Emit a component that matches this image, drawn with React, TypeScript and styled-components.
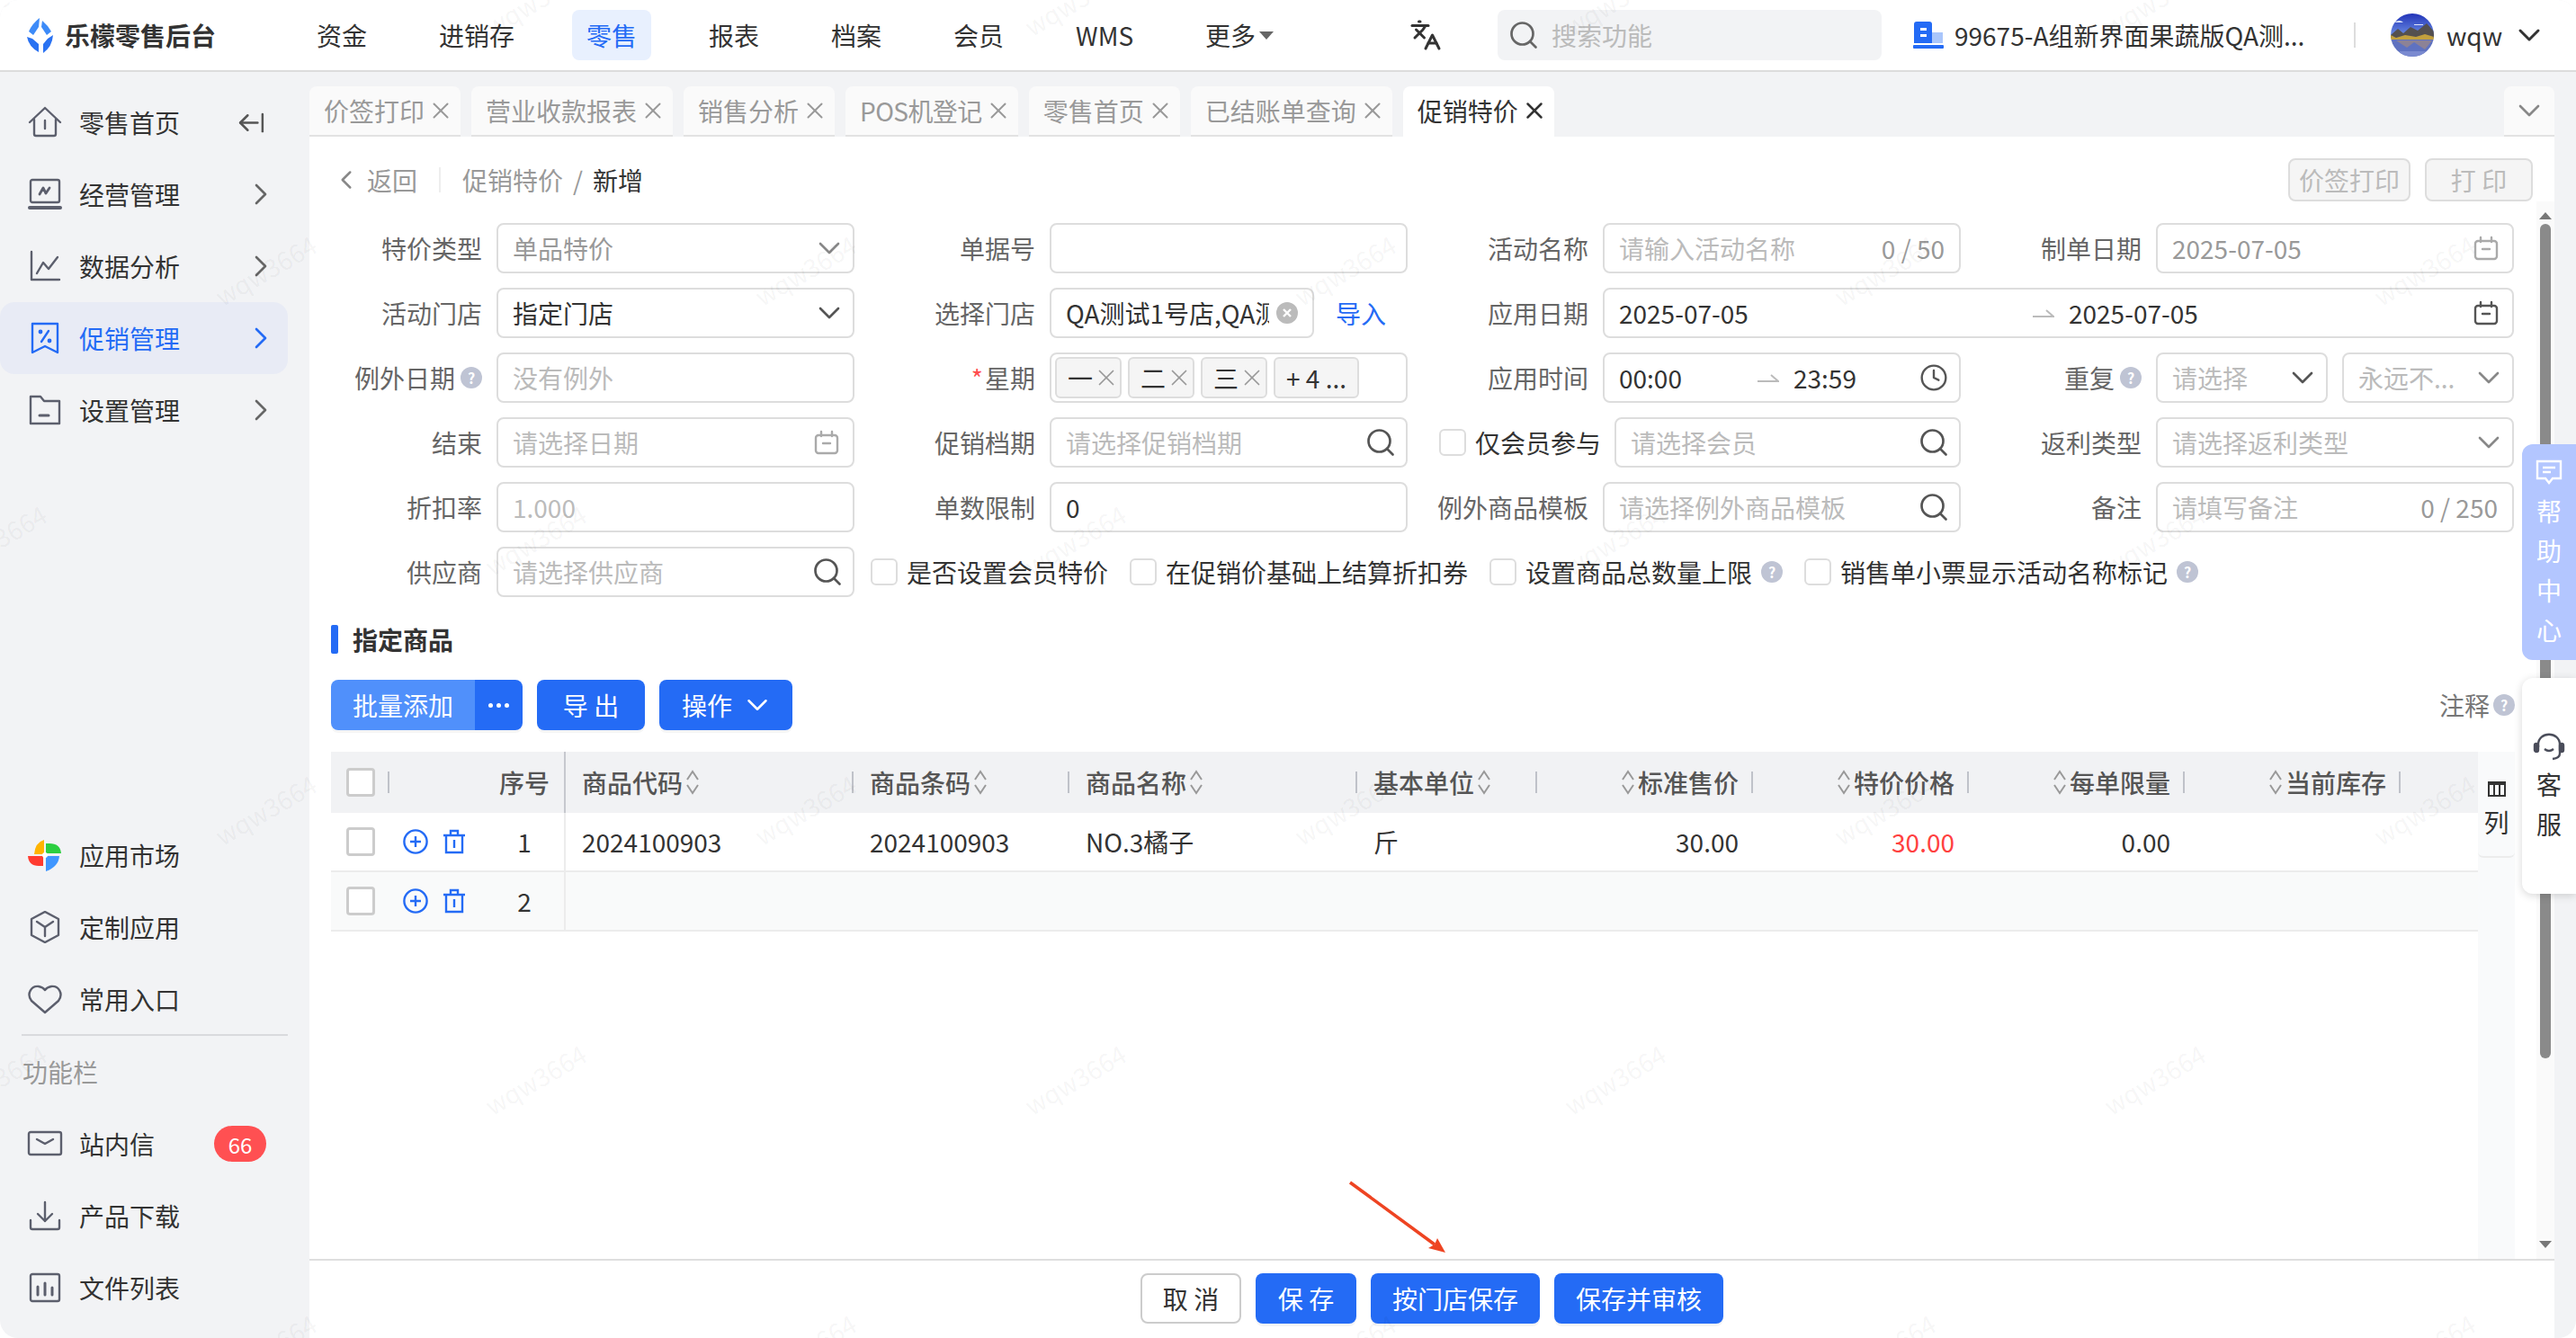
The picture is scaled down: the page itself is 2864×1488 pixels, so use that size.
import styled, { createGlobalStyle } from 'styled-components'
import {
  ArrowLeftFromLine,
  ChevronDown,
  ChevronLeft,
  ChevronRight,
  Clock,
  Languages,
  Search,
  X,
} from 'lucide-react'

const GlobalStyle = createGlobalStyle`
  html, body {
    margin: 0;
    padding: 0;
    background: #fff;
    font-family: "Noto Sans CJK SC", "Noto Sans", sans-serif;
    font-size: 28px;
    color: #333;
  }
`

const Frame = styled.div`
  position: relative;
  display: flex;
  flex-direction: column;
  width: 2864px;
  height: 1488px;
  overflow: hidden;
  border-radius: 20px;
  background: #f2f3f5;
`

/* ---------- header ---------- */

const Header = styled.header`
  display: flex;
  align-items: center;
  flex: none;
  height: 78px;
  padding-left: 30px;
  background: #fff;
  border-bottom: 2px solid #dcdcdc;
`

const Brand = styled.div`
  display: flex;
  align-items: center;
  gap: 12px;
  width: 306px;
  font-weight: 700;
  color: #333;
  white-space: nowrap;
`

const Nav = styled.nav`
  display: flex;
  align-items: center;
  gap: 48px;
  width: 1231px;
`

const NavItem = styled.div<{ $active?: boolean }>`
  display: flex;
  align-items: center;
  height: 56px;
  padding: 0 16px;
  border-radius: 8px;
  color: ${({ $active }) => ($active ? '#246bf5' : '#333')};
  background: ${({ $active }) => ($active ? '#e8f0fe' : 'transparent')};
  white-space: nowrap;
`

const NavCaret = styled.span`
  width: 0;
  height: 0;
  margin-left: 4px;
  border-left: 8px solid transparent;
  border-right: 8px solid transparent;
  border-top: 9px solid #666;
`

const HeaderTools = styled.div`
  display: flex;
  align-items: center;
`

const SearchBox = styled.div`
  display: flex;
  align-items: center;
  gap: 13px;
  width: 427px;
  height: 56px;
  margin-left: 62px;
  padding-left: 11px;
  box-sizing: border-box;
  border-radius: 8px;
  background: #f2f3f5;
  color: #bbb;
`

const StoreName = styled.div`
  display: flex;
  align-items: center;
  gap: 12px;
  width: 490px;
  margin-left: 35px;
  white-space: nowrap;
`

const HeaderDivider = styled.span`
  width: 2px;
  height: 28px;
  background: #ddd;
`

const UserName = styled.div`
  display: flex;
  align-items: center;
  gap: 14px;
  margin-left: 39px;
`

const UserChevron = styled(ChevronDown)`
  margin-left: -4px;
`

/* ---------- layout ---------- */

const Body = styled.div`
  display: flex;
  flex: 1;
  min-height: 0;
`

const Sidebar = styled.aside`
  display: flex;
  flex-direction: column;
  flex: none;
  width: 344px;
  padding: 16px 0;
  box-sizing: border-box;
`

const SideItem = styled.div<{ $active?: boolean }>`
  display: flex;
  align-items: center;
  flex: none;
  width: 320px;
  height: 80px;
  box-sizing: border-box;
  padding: 0 10px 0 30px;
  border-radius: 16px;
  color: ${({ $active }) => ($active ? '#246bf5' : '#333')};
  background: ${({ $active }) => ($active ? '#e8ebf5' : 'transparent')};

  > svg:first-child {
    flex: none;
    margin-right: 18px;
  }
  > svg:last-child {
    margin-left: auto;
  }
`

const CollapseIcon = styled(ArrowLeftFromLine)`
  margin-right: 14px;
`

const SideSpacer = styled.div`
  flex: 1;
`

const SideRule = styled.div`
  flex: none;
  width: 296px;
  height: 2px;
  margin: -1px 0 0 24px;
  background: #d9dadd;
`

const SideCaption = styled.div`
  display: flex;
  align-items: center;
  flex: none;
  height: 80px;
  padding-left: 25px;
  color: #999;
`

const CountBadge = styled.div`
  display: flex;
  align-items: center;
  justify-content: center;
  flex: none;
  width: 58px;
  height: 40px;
  margin: 0 14px 0 auto;
  border-radius: 20px;
  font-size: 24px;
  color: #fff;
  background: #ff5052;
`

const Main = styled.main`
  display: flex;
  flex-direction: column;
  flex: 1;
  min-width: 0;
  padding-right: 24px;
`

const TabBar = styled.div`
  display: flex;
  align-items: flex-end;
  flex: none;
  gap: 12px;
  height: 72px;
`

const Tab = styled.div<{ $active?: boolean; $tight?: boolean }>`
  display: flex;
  align-items: center;
  height: 56px;
  gap: 3px;
  padding: 0 7px 0 16px;
  box-sizing: border-box;
  border-radius: 8px 8px 0 0;
  white-space: nowrap;
  letter-spacing: ${({ $tight }) => ($tight ? '-0.6px' : 'normal')};
  color: ${({ $active }) => ($active ? '#333' : '#999')};
  background: ${({ $active }) => ($active ? '#fff' : '#fafafa')};
  border-bottom: 2px solid ${({ $active }) => ($active ? '#fff' : '#e2e2e2')};
`

const TabMenu = styled(Tab)`
  justify-content: center;
  width: 56px;
  margin-left: auto;
  padding: 0;
`

const Content = styled.section`
  position: relative;
  display: flex;
  flex-direction: column;
  flex: 1;
  min-height: 0;
  background: #fff;
`

const Page = styled.div`
  display: flex;
  flex-direction: column;
  flex: 1;
  min-height: 0;
  padding: 24px 44px 0 24px;
`

const Crumbs = styled.div`
  display: flex;
  align-items: center;
  flex: none;
  height: 48px;
  margin: 0 -20px 24px 0;
  color: #999;
`

const CrumbBack = styled.span`
  display: flex;
  align-items: center;
  gap: 6px;
`

const CrumbRule = styled.span`
  width: 2px;
  height: 28px;
  margin: 0 24px;
  background: #eee;
`

const CrumbSlash = styled.span`
  margin: 0 11px;
`

const CrumbCurrent = styled.span`
  color: #333;
`

const CrumbActions = styled.div`
  display: flex;
  gap: 16px;
  margin-left: auto;
`

const GhostButton = styled.button<{ $wide?: boolean }>`
  width: ${({ $wide }) => ($wide ? '136px' : '120px')};
  height: 48px;
  padding: 0;
  font: inherit;
  color: #bbb;
  background: #f5f5f5;
  border: 2px solid #ddd;
  border-radius: 8px;
`

/* ---------- form ---------- */

const Form = styled.div`
  display: grid;
  flex: none;
  grid-template-columns: repeat(4, 590px);
  grid-auto-rows: 56px;
  gap: 16px 25px;
  margin-left: -8px;
`

const Field = styled.div<{ $span?: number }>`
  display: flex;
  align-items: center;
  min-width: 0;
  grid-column: span ${({ $span }) => $span ?? 1};
`

const Label = styled.label`
  display: flex;
  align-items: center;
  justify-content: flex-end;
  flex: none;
  gap: 6px;
  width: 176px;
  margin-right: 16px;
  color: #666;
  white-space: nowrap;
`

const Required = styled.span`
  color: #ff4d4f;
  margin-right: -4px;
`

const Control = styled.div<{ $tone?: 'muted' | 'ghost' }>`
  display: flex;
  align-items: center;
  flex: 1;
  min-width: 0;
  height: 56px;
  padding: 0 16px;
  box-sizing: border-box;
  border: 2px solid #ddd;
  border-radius: 8px;
  background: #fff;
  white-space: nowrap;
  color: ${({ $tone }) =>
    $tone === 'muted' ? '#999' : $tone === 'ghost' ? '#bbb' : '#333'};

  > svg {
    flex: none;
    margin-left: auto;
  }
`

const Counter = styled.span`
  margin-left: auto;
  color: #999;
`

const StoreValue = styled.span`
  flex: 1;
  min-width: 0;
  margin-right: 8px;
  overflow: hidden;
`

const LinkText = styled.a`
  flex: none;
  margin: 0 24px;
  color: #246bf5;
`

const TagBox = styled(Control)`
  gap: 7px;
  padding: 0 4px;
`

const Tag = styled.span`
  display: flex;
  align-items: center;
  flex: none;
  height: 46px;
  padding-left: 12px;
  box-sizing: border-box;
  border: 2px solid #ddd;
  border-radius: 6px;
  background: #f5f5f5;
`

const MoreTag = styled(Tag)`
  justify-content: center;
  width: 95px;
  padding: 0;
`

const RangeText = styled.span<{ $w: number }>`
  flex: none;
  width: ${({ $w }) => $w}px;
`

const RangeArrow = styled.svg`
  flex: none;
  margin-right: 16px;
  && {
    margin-left: 0;
  }
`

const DropIcon = styled(ChevronDown)`
  && {
    margin-right: -10px;
  }
`

const LensIcon = styled(Search)`
  && {
    margin-right: -6px;
  }
`

const ClockIcon = styled(Clock)`
  && {
    margin-right: -4px;
  }
`

const Pair = styled.div`
  display: flex;
  flex: 1;
  gap: 16px;
  min-width: 0;
`

const Hint = styled.span`
  display: inline-flex;
  align-items: center;
  justify-content: center;
  flex: none;
  width: 24px;
  height: 24px;
  border-radius: 50%;
  font-size: 16px;
  font-weight: 700;
  color: #fff;
  background: #bfc4d4;
`

const CheckLabel = styled.label`
  display: flex;
  align-items: center;
  flex: none;
  gap: 10px;
  color: #333;
  white-space: nowrap;
`

const CheckBox = styled.span`
  flex: none;
  width: 30px;
  height: 30px;
  box-sizing: border-box;
  border: 2px solid #ddd;
  border-radius: 6px;
  background: #fff;
`

const MemberField = styled(Field)`
  padding-left: 10px;
  gap: 15px;
`

const CheckRow = styled.div`
  display: flex;
  align-items: center;
  grid-column: 2 / 5;
  gap: 24px;
  margin-left: -7px;
`

/* ---------- table ---------- */

const SectionTitle = styled.h3`
  display: flex;
  align-items: center;
  flex: none;
  gap: 16px;
  height: 32px;
  margin: 31px 0 29px;
  font-size: 28px;
  font-weight: 700;
  color: #333;

  &::before {
    content: '';
    width: 8px;
    height: 32px;
    border-radius: 2px;
    background: #246bf5;
  }
`

const Toolbar = styled.div`
  display: flex;
  align-items: center;
  flex: none;
  gap: 16px;
  height: 56px;
  margin-bottom: 24px;
`

const SplitButton = styled.div`
  display: flex;
  height: 56px;
  overflow: hidden;
  border-radius: 8px;
  box-shadow: 0 3px 0 rgba(0, 0, 0, 0.04);
  color: #fff;
`

const SplitMain = styled.div`
  display: flex;
  align-items: center;
  justify-content: center;
  width: 160px;
  background: #5090fb;
`

const SplitMore = styled.div`
  display: flex;
  align-items: center;
  justify-content: center;
  gap: 4px;
  width: 53px;
  background: #246bf5;
`

const Dot = styled.i`
  width: 5px;
  height: 5px;
  border-radius: 50%;
  background: #fff;
`

const PrimaryButton = styled.button<{ $width: number }>`
  display: flex;
  align-items: center;
  justify-content: center;
  gap: 9px;
  flex: none;
  width: ${({ $width }) => $width}px;
  height: 56px;
  padding: 0;
  font: inherit;
  color: #fff;
  background: #246bf5;
  border: none;
  border-radius: 8px;
  box-shadow: 0 3px 0 rgba(0, 0, 0, 0.04);
`

const MenuButton = styled(PrimaryButton)`
  padding-left: 5px;
`

const Notes = styled.div`
  display: flex;
  align-items: center;
  gap: 4px;
  margin-left: auto;
  color: #777;
`

const TableWrap = styled.div`
  display: flex;
  flex: 1;
  min-height: 0;
`

const Table = styled.div`
  flex: none;
  width: 2387px;
`

const Row = styled.div<{ $kind: 'head' | 'even' | 'odd' }>`
  display: grid;
  grid-template-columns: 261px 320px 240px 320px 200px 240px 240px 240px 240px 86px;
  box-sizing: border-box;
  height: ${({ $kind }) => ($kind === 'head' ? '68px' : '66px')};
  background: ${({ $kind }) =>
    $kind === 'head' ? '#f1f2f4' : $kind === 'even' ? '#f9fafa' : '#fff'};
  border-bottom: ${({ $kind }) =>
    $kind === 'head' ? 'none' : '2px solid #ececec'};
  font-weight: ${({ $kind }) => ($kind === 'head' ? 500 : 400)};
  color: ${({ $kind }) => ($kind === 'head' ? '#555' : '#333')};
`

const Cell = styled.div<{ $right?: boolean; $sep?: boolean; $red?: boolean }>`
  position: relative;
  display: flex;
  align-items: center;
  justify-content: ${({ $right }) => ($right ? 'flex-end' : 'flex-start')};
  gap: 3px;
  padding: ${({ $right }) => ($right ? '0 16px 0 0' : '0 0 0 18px')};
  white-space: nowrap;
  color: ${({ $red }) => ($red ? '#ff4040' : 'inherit')};

  &::after {
    content: '';
    display: ${({ $sep }) => ($sep ? 'block' : 'none')};
    position: absolute;
    top: 50%;
    right: 0;
    width: 2px;
    height: 24px;
    margin-top: -12px;
    background: #bfc2c9;
  }
`

const LeadCell = styled.div<{ $head?: boolean }>`
  display: flex;
  align-items: center;
  padding-left: 17px;
  border-right: 2px solid ${({ $head }) => ($head ? '#c6c8ce' : '#ececec')};
`

const RowCheck = styled.span`
  flex: none;
  width: 32px;
  height: 32px;
  box-sizing: border-box;
  border: 3px solid #ccc;
  border-radius: 4px;
  background: #fff;
`

const HeadRule = styled.span`
  width: 2px;
  height: 24px;
  margin-left: 14px;
  background: #bfc2c9;
`

const RowActions = styled.span`
  display: flex;
  align-items: center;
  gap: 16px;
  margin-left: 31px;
`

const RowIndex = styled.span`
  flex: none;
  width: 56px;
  margin: 0 16px 0 auto;
  text-align: center;
`

const ColPanel = styled.div`
  display: flex;
  flex-direction: column;
  flex: none;
  width: 41px;
  background: #f9fafb;
`

const ColButton = styled.div`
  display: flex;
  flex-direction: column;
  align-items: center;
  gap: 8px;
  height: 118px;
  padding-top: 32px;
  box-sizing: border-box;
  border-bottom: 2px solid #ececec;
  border-radius: 0 0 6px 6px;
`

/* ---------- footer and overlays ---------- */

const Footer = styled.footer`
  display: flex;
  align-items: center;
  justify-content: center;
  flex: none;
  gap: 16px;
  height: 88px;
  padding-bottom: 2px;
  box-sizing: border-box;
  background: #fff;
  border-top: 2px solid #dedede;
`

const CancelButton = styled.button`
  width: 112px;
  height: 56px;
  padding: 0;
  font: inherit;
  color: #333;
  background: #fff;
  border: 2px solid #ccc;
  border-radius: 8px;
`

const ScrollTrack = styled.div`
  position: absolute;
  top: 72px;
  right: 0;
  bottom: 88px;
  display: flex;
  flex-direction: column;
  align-items: center;
  width: 20px;
  background: #fafafa;
`

const ScrollThumb = styled.div`
  width: 12px;
  height: 928px;
  margin: 5px 0 auto;
  border-radius: 6px;
  background: #8a8a8a;
`

const ScrollArrow = styled.span<{ $down?: boolean }>`
  flex: none;
  width: 0;
  height: 0;
  margin: ${({ $down }) => ($down ? '0 0 12px' : '12px 0 0')};
  border-left: 7px solid transparent;
  border-right: 7px solid transparent;
  border-${({ $down }) => ($down ? 'top' : 'bottom')}: 8px solid #777;
`

const SideTab = styled.div<{ $top: number; $help?: boolean }>`
  position: absolute;
  top: ${({ $top }) => $top}px;
  right: 0;
  display: flex;
  flex-direction: column;
  align-items: center;
  width: 60px;
  height: 240px;
  box-sizing: border-box;
  border-radius: 12px 0 0 12px;
  line-height: 44px;
  color: ${({ $help }) => ($help ? '#fff' : '#333')};
  background: ${({ $help }) => ($help ? '#b3c6ff' : '#fff')};
  box-shadow: ${({ $help }) =>
    $help ? 'none' : '0 2px 10px rgba(0, 0, 0, 0.16)'};
  padding-top: ${({ $help }) => ($help ? '16px' : '60px')};

  > svg {
    flex: none;
    margin-bottom: ${({ $help }) => ($help ? '6px' : '2px')};
  }
`

const MarkLayer = styled.div`
  position: absolute;
  inset: -150px 0 0 0;
  overflow: hidden;
  pointer-events: none;
`

const MarkRow = styled.div<{ $shift: boolean }>`
  display: flex;
  height: 300px;
  margin-left: ${({ $shift }) => ($shift ? '-5px' : '-305px')};
`

const Mark = styled.span`
  display: flex;
  align-items: center;
  justify-content: center;
  flex: none;
  width: 600px;
  font-size: 28px;
  color: rgba(0, 0, 0, 0.05);
  transform: rotate(-30deg);
`

const AnnotationArrow = styled.svg`
  position: absolute;
  top: 1310px;
  left: 1495px;
`

/* ---------- icons ---------- */

const iconGray = '#5c5f6d'

const LogoIcon = () => (
  <svg width="30" height="40" viewBox="0 0 30 40">
    <path d="M14 1 Q6 7 2 16 L7 20 L13 11Z" fill="#3d8bf8" />
    <path d="M17 4 Q23 9 27 16 L22 20 L16 11Z" fill="#3d8bf8" />
    <path d="M0 22 Q2 33 13 39 V30 L6 24Z" fill="#2a72f2" />
    <path d="M29 20 Q28 33 18 40 V30 L23 24Z" fill="#2a72f2" />
  </svg>
)

const StoreIcon = () => (
  <svg width="34" height="30" viewBox="0 0 34 30">
    <path d="M1 3 Q1 0 4 0 H18 Q21 0 21 3 V24 H1Z" fill="#246bf5" />
    <rect x="21" y="12" width="12" height="12" fill="#a9c6fb" />
    <rect x="8" y="7" width="7" height="3" fill="#fff" />
    <rect x="8" y="14" width="7" height="3" fill="#fff" />
    <rect x="0" y="26" width="34" height="4" rx="1" fill="#246bf5" />
  </svg>
)

const Avatar = () => (
  <svg width="48" height="48" viewBox="0 0 48 48">
    <defs>
      <clipPath id="avatar-clip">
        <circle cx="24" cy="24" r="24" />
      </clipPath>
      <linearGradient id="avatar-sky" x1="0" y1="0" x2="0" y2="1">
        <stop offset="0" stopColor="#2234b8" />
        <stop offset="1" stopColor="#6f92e6" />
      </linearGradient>
    </defs>
    <g clipPath="url(#avatar-clip)">
      <rect width="48" height="26" fill="url(#avatar-sky)" />
      <path d="M4 10 Q10 6 14 10Z M26 12 H36 V13 H26Z" fill="#dfe6fa" />
      <path d="M0 24 L8 17 L14 22 L22 15 L30 19 L40 11 L48 20 V28 H0Z" fill="#54504f" />
      <path d="M0 24 L6 27 L16 24 L28 26 L38 23 L48 26 V30 H0Z" fill="#c2a03e" />
      <rect y="29" width="48" height="19" fill="#5f72c0" />
      <path d="M6 30 L18 38 L26 32 L38 40 L46 30Z" fill="#8c8296" />
      <path d="M10 42 H40 V48 H10Z" fill="#7a8ad0" />
    </g>
  </svg>
)

const Stroke = styled.svg.attrs({
  fill: 'none',
  strokeWidth: 2.4,
  strokeLinejoin: 'round',
  strokeLinecap: 'round',
})``

const HomeIcon = () => (
  <Stroke width="40" height="36" viewBox="0 0 40 36" stroke={iconGray}>
    <path d="M20 2 L37 18 M20 2 L3 18 M8 15 V31 Q8 33 10 33 H30 Q32 33 32 31 V15 M20 16 V25" />
  </Stroke>
)

const BoardIcon = () => (
  <Stroke width="40" height="36" viewBox="0 0 40 36" stroke={iconGray}>
    <rect x="4" y="2" width="32" height="25" rx="2" />
    <path d="M14 18 L18 11 L21 17 L25 11" strokeWidth="2.8" />
    <path d="M3 33 H37" strokeWidth="4" />
  </Stroke>
)

const ChartIcon = () => (
  <Stroke width="40" height="36" viewBox="0 0 40 36" stroke={iconGray}>
    <path d="M5 2 V33 H36 M11 26 L18 14 L24 21 L34 8" />
  </Stroke>
)

const PromoIcon = () => (
  <Stroke width="40" height="36" viewBox="0 0 40 36" stroke="#246bf5">
    <path d="M6 2 H34 V34 L20 27 L6 34Z" />
    <path d="M24 10 L16 22" />
    <circle cx="15" cy="11" r="1.2" />
    <circle cx="25" cy="21" r="1.2" />
  </Stroke>
)

const FolderIcon = () => (
  <Stroke width="40" height="36" viewBox="0 0 40 36" stroke={iconGray}>
    <path d="M4 3 H15 L19 8 H36 V33 H4Z" />
    <path d="M14 24 H24" strokeWidth="3" />
  </Stroke>
)

const PinwheelIcon = () => (
  <svg width="40" height="36" viewBox="0 0 40 36">
    <path d="M19 17 H8 Q9 4 19 1Z" fill="#ffb400" />
    <path d="M21 16 V5 H25 Q37 5 38 16Z" fill="#2ccf40" />
    <path d="M21 19 H36 Q35 31 21 36Z" fill="#3f96ff" />
    <path d="M18 19 V30 H13 Q2 30 1 19Z" fill="#ff3b30" />
    <circle cx="20" cy="18" r="3" fill="#fff" />
  </svg>
)

const CubeIcon = () => (
  <Stroke width="40" height="36" viewBox="0 0 40 36" stroke={iconGray}>
    <path d="M20 1 L35 9 V27 L20 35 L5 27 V9Z" />
    <path d="M11 12 L20 18 L29 12 M20 18 V28" />
  </Stroke>
)

const HeartIcon = () => (
  <Stroke width="40" height="36" viewBox="0 0 40 36" stroke={iconGray}>
    <path d="M20 33 L5 20 C-1 12 5 3 13 4 Q18 5 20 8 Q22 5 27 4 C35 3 41 12 35 20Z" />
  </Stroke>
)

const MailIcon = () => (
  <Stroke width="40" height="36" viewBox="0 0 40 36" stroke={iconGray}>
    <rect x="2" y="5" width="36" height="25" rx="2" />
    <path d="M11 13 L20 18 L29 13" />
  </Stroke>
)

const DownloadIcon = () => (
  <Stroke width="40" height="36" viewBox="0 0 40 36" stroke={iconGray}>
    <path d="M20 3 V24 M12 16 L20 24 L28 16 M4 23 V31 Q4 33 6 33 H34 Q36 33 36 31 V23" />
  </Stroke>
)

const FilesIcon = () => (
  <Stroke width="40" height="36" viewBox="0 0 40 36" stroke={iconGray}>
    <rect x="4" y="3" width="32" height="30" rx="2" />
    <path d="M12 17 V26 M20 13 V26 M28 18 V26" strokeWidth="3" />
  </Stroke>
)

const CalendarSvg = styled(Stroke)`
  && {
    margin-right: -2px;
  }
`

const CalendarIcon = ({ dark }: { dark?: boolean }) => (
  <CalendarSvg width="30" height="28" viewBox="0 0 30 28" stroke={dark ? '#555' : '#aaa'}>
    <rect x="3" y="6" width="24" height="20" rx="3" />
    <path d="M9 2 V7 M21 2 V7 M11 15 H19" />
  </CalendarSvg>
)

const Chevron = ({ color = '#888' }: { color?: string }) => (
  <DropIcon size={40} color={color} strokeWidth={1.6} />
)
const Lens = () => <LensIcon size={36} color="#555" strokeWidth={1.8} />

const ClearIcon = () => (
  <svg width="24" height="24" viewBox="0 0 24 24">
    <circle cx="12" cy="12" r="12" fill="#bbb" />
    <path d="M8 8 L16 16 M16 8 L8 16" stroke="#fff" strokeWidth="2.4" />
  </svg>
)

const ThinArrow = () => (
  <RangeArrow width="24" height="12" viewBox="0 0 24 12" fill="none" stroke="#bbb" strokeWidth="2">
    <path d="M0 10 H23 L15 3" />
  </RangeArrow>
)

const TagClose = () => <X size={30} color="#999" strokeWidth={1.4} />

const SortIcon = () => (
  <svg width="16" height="28" viewBox="0 0 16 28" fill="none" stroke="#999" strokeWidth="2">
    <path d="M2 11 L8 2 L14 11 M2 17 L8 26 L14 17" />
  </svg>
)

const AddIcon = () => (
  <svg width="28" height="28" viewBox="0 0 28 28" fill="none" stroke="#246bf5" strokeWidth="2.4">
    <circle cx="14" cy="14" r="12.6" />
    <path d="M14 8 V20 M8 14 H20" />
  </svg>
)

const TrashIcon = () => (
  <svg width="26" height="28" viewBox="0 0 26 28" fill="none" stroke="#246bf5" strokeWidth="2.4">
    <path d="M1 7 H25 M9 7 V2 H17 V7 M4 7 V26 H22 V7 M13 12 V21" />
  </svg>
)

const ColumnsIcon = () => (
  <svg width="20" height="18" viewBox="0 0 20 18" fill="none" stroke="#333" strokeWidth="2">
    <path d="M1 2 H19 V17 H1Z M7 2 V17 M13 2 V17" />
    <path d="M1 3 H19" strokeWidth="4" />
  </svg>
)

const BubbleIcon = () => (
  <svg width="32" height="30" viewBox="0 0 32 30" fill="none" stroke="#fff" strokeWidth="2.4">
    <path d="M3 3 H29 V22 H20 L16 27 L12 22 H3Z" />
    <path d="M9 10 H23 M9 15 H18" />
  </svg>
)

const HeadsetIcon = () => (
  <svg width="36" height="34" viewBox="0 0 36 34" fill="none" stroke="#4a4d5a" strokeWidth="2.4">
    <path d="M6 17 V14 C6 -1 30 -1 30 14 V24 Q30 29 22 30" />
    <rect x="2" y="13" width="4" height="9" rx="2" fill="#4a4d5a" />
    <rect x="30" y="13" width="4" height="9" rx="2" fill="#4a4d5a" />
    <path d="M13 19 Q18 23 23 19" />
  </svg>
)

/* ---------- page data ---------- */

const navItems = ['资金', '进销存', '零售', '报表', '档案', '会员', 'WMS']
const tabs = ['价签打印', '营业收款报表', '销售分析', 'POS机登记', '零售首页', '已结账单查询']

const sideArrow = (color: string) => (
  <ChevronRight size={40} color={color} strokeWidth={1.6} />
)

const sideTop = [
  { label: '零售首页', icon: <HomeIcon />, tail: <CollapseIcon size={33} color="#555" strokeWidth={1.8} /> },
  { label: '经营管理', icon: <BoardIcon />, tail: sideArrow('#666') },
  { label: '数据分析', icon: <ChartIcon />, tail: sideArrow('#666') },
  { label: '促销管理', icon: <PromoIcon />, tail: sideArrow('#246bf5'), active: true },
  { label: '设置管理', icon: <FolderIcon />, tail: sideArrow('#666') },
]

const columns = [
  { label: '商品代码', value: '2024100903', sep: true },
  { label: '商品条码', value: '2024100903', sep: true },
  { label: '商品名称', value: 'NO.3橘子', sep: true },
  { label: '基本单位', value: '斤', sep: true },
  { label: '标准售价', value: '30.00', right: true, sep: true },
  { label: '特价价格', value: '30.00', right: true, sep: true, red: true },
  { label: '每单限量', value: '0.00', right: true, sep: true },
  { label: '当前库存', value: '', right: true, sep: true },
  { label: '', value: '' },
]

const markRows = [0, 1, 2, 3, 4, 5]
const marksPerRow = [0, 1, 2, 3, 4, 5]

const RowLead = ({ index }: { index: number }) => (
  <LeadCell>
    <RowCheck />
    <RowActions>
      <AddIcon />
      <TrashIcon />
    </RowActions>
    <RowIndex>{index}</RowIndex>
  </LeadCell>
)

const App = () => (
  <Frame>
    <GlobalStyle />
    <Header>
      <Brand>
        <LogoIcon />
        乐檬零售后台
      </Brand>
      <Nav>
        {navItems.map((item) => (
          <NavItem key={item} $active={item === '零售'}>
            {item}
          </NavItem>
        ))}
        <NavItem>
          更多
          <NavCaret />
        </NavItem>
      </Nav>
      <HeaderTools>
        <Languages size={36} color="#333" strokeWidth={2} />
        <SearchBox>
          <Search size={36} color="#666" strokeWidth={1.8} />
          搜索功能
        </SearchBox>
        <StoreName>
          <StoreIcon />
          99675-A组新界面果蔬版QA测...
        </StoreName>
        <HeaderDivider />
        <UserName>
          <Avatar />
          wqw
          <UserChevron size={40} color="#333" strokeWidth={1.8} />
        </UserName>
      </HeaderTools>
    </Header>
    <Body>
      <Sidebar>
        {sideTop.map((item) => (
          <SideItem key={item.label} $active={item.active}>
            {item.icon}
            <span>{item.label}</span>
            {item.tail}
          </SideItem>
        ))}
        <SideSpacer />
        <SideItem>
          <PinwheelIcon />
          <span>应用市场</span>
        </SideItem>
        <SideItem>
          <CubeIcon />
          <span>定制应用</span>
        </SideItem>
        <SideItem>
          <HeartIcon />
          <span>常用入口</span>
        </SideItem>
        <SideRule />
        <SideCaption>功能栏</SideCaption>
        <SideItem>
          <MailIcon />
          <span>站内信</span>
          <CountBadge>66</CountBadge>
        </SideItem>
        <SideItem>
          <DownloadIcon />
          <span>产品下载</span>
        </SideItem>
        <SideItem>
          <FilesIcon />
          <span>文件列表</span>
        </SideItem>
      </Sidebar>
      <Main>
        <TabBar>
          {tabs.map((tab) => (
            <Tab key={tab} $tight={tab.startsWith('POS')}>
              {tab}
              <X size={30} color="#999" strokeWidth={1.6} />
            </Tab>
          ))}
          <Tab $active>
            促销特价
            <X size={30} color="#333" strokeWidth={2} />
          </Tab>
          <TabMenu>
            <ChevronDown size={40} color="#888" strokeWidth={1.6} />
          </TabMenu>
        </TabBar>
        <Content>
          <Page>
            <Crumbs>
              <CrumbBack>
                <ChevronLeft size={34} color="#888" strokeWidth={1.8} />
                返回
              </CrumbBack>
              <CrumbRule />
              促销特价
              <CrumbSlash>/</CrumbSlash>
              <CrumbCurrent>新增</CrumbCurrent>
              <CrumbActions>
                <GhostButton $wide>价签打印</GhostButton>
                <GhostButton>打 印</GhostButton>
              </CrumbActions>
            </Crumbs>
            <Form>
              <Field>
                <Label>特价类型</Label>
                <Control $tone="muted">
                  单品特价
                  <Chevron />
                </Control>
              </Field>
              <Field>
                <Label>单据号</Label>
                <Control />
              </Field>
              <Field>
                <Label>活动名称</Label>
                <Control $tone="ghost">
                  请输入活动名称
                  <Counter>0 / 50</Counter>
                </Control>
              </Field>
              <Field>
                <Label>制单日期</Label>
                <Control $tone="muted">
                  2025-07-05
                  <CalendarIcon />
                </Control>
              </Field>

              <Field>
                <Label>活动门店</Label>
                <Control>
                  指定门店
                  <Chevron color="#555" />
                </Control>
              </Field>
              <Field>
                <Label>选择门店</Label>
                <Control>
                  <StoreValue>QA测试1号店,QA测试2号店</StoreValue>
                  <ClearIcon />
                </Control>
                <LinkText>导入</LinkText>
              </Field>
              <Field $span={2}>
                <Label>应用日期</Label>
                <Control>
                  <RangeText $w={460}>2025-07-05</RangeText>
                  <ThinArrow />
                  2025-07-05
                  <CalendarIcon dark />
                </Control>
              </Field>

              <Field>
                <Label>
                  例外日期
                  <Hint>?</Hint>
                </Label>
                <Control $tone="ghost">没有例外</Control>
              </Field>
              <Field>
                <Label>
                  <span>
                    <Required>*</Required> 星期
                  </span>
                </Label>
                <TagBox>
                  <Tag>
                    一<TagClose />
                  </Tag>
                  <Tag>
                    二<TagClose />
                  </Tag>
                  <Tag>
                    三<TagClose />
                  </Tag>
                  <MoreTag>+ 4 ...</MoreTag>
                </TagBox>
              </Field>
              <Field>
                <Label>应用时间</Label>
                <Control>
                  <RangeText $w={154}>00:00</RangeText>
                  <ThinArrow />
                  23:59
                  <ClockIcon size={32} color="#555" strokeWidth={1.8} />
                </Control>
              </Field>
              <Field>
                <Label>
                  重复
                  <Hint>?</Hint>
                </Label>
                <Pair>
                  <Control $tone="ghost">
                    请选择
                    <Chevron color="#555" />
                  </Control>
                  <Control $tone="ghost">
                    永远不...
                    <Chevron />
                  </Control>
                </Pair>
              </Field>

              <Field>
                <Label>结束</Label>
                <Control $tone="ghost">
                  请选择日期
                  <CalendarIcon />
                </Control>
              </Field>
              <Field>
                <Label>促销档期</Label>
                <Control $tone="ghost">
                  请选择促销档期
                  <Lens />
                </Control>
              </Field>
              <MemberField>
                <CheckLabel>
                  <CheckBox />
                  仅会员参与
                </CheckLabel>
                <Control $tone="ghost">
                  请选择会员
                  <Lens />
                </Control>
              </MemberField>
              <Field>
                <Label>返利类型</Label>
                <Control $tone="ghost">
                  请选择返利类型
                  <Chevron />
                </Control>
              </Field>

              <Field>
                <Label>折扣率</Label>
                <Control $tone="ghost">1.000</Control>
              </Field>
              <Field>
                <Label>单数限制</Label>
                <Control>0</Control>
              </Field>
              <Field>
                <Label>例外商品模板</Label>
                <Control $tone="ghost">
                  请选择例外商品模板
                  <Lens />
                </Control>
              </Field>
              <Field>
                <Label>备注</Label>
                <Control $tone="ghost">
                  请填写备注
                  <Counter>0 / 250</Counter>
                </Control>
              </Field>

              <Field>
                <Label>供应商</Label>
                <Control $tone="ghost">
                  请选择供应商
                  <Lens />
                </Control>
              </Field>
              <CheckRow>
                <CheckLabel>
                  <CheckBox />
                  是否设置会员特价
                </CheckLabel>
                <CheckLabel>
                  <CheckBox />
                  在促销价基础上结算折扣券
                </CheckLabel>
                <CheckLabel>
                  <CheckBox />
                  设置商品总数量上限
                  <Hint>?</Hint>
                </CheckLabel>
                <CheckLabel>
                  <CheckBox />
                  销售单小票显示活动名称标记
                  <Hint>?</Hint>
                </CheckLabel>
              </CheckRow>
            </Form>

            <SectionTitle>指定商品</SectionTitle>
            <Toolbar>
              <SplitButton>
                <SplitMain>批量添加</SplitMain>
                <SplitMore>
                  <Dot />
                  <Dot />
                  <Dot />
                </SplitMore>
              </SplitButton>
              <PrimaryButton $width={120}>导 出</PrimaryButton>
              <MenuButton $width={148}>
                操作
                <ChevronDown size={38} color="#fff" strokeWidth={1.6} />
              </MenuButton>
              <Notes>
                注释
                <Hint>?</Hint>
              </Notes>
            </Toolbar>
            <TableWrap>
              <Table>
                <Row $kind="head">
                  <LeadCell $head>
                    <RowCheck />
                    <HeadRule />
                    <RowIndex>序号</RowIndex>
                  </LeadCell>
                  {columns.map((col, i) => (
                    <Cell key={i} $right={col.right} $sep={col.sep}>
                      {col.right && col.label && <SortIcon />}
                      {col.label}
                      {!col.right && col.label && <SortIcon />}
                    </Cell>
                  ))}
                </Row>
                <Row $kind="odd">
                  <RowLead index={1} />
                  {columns.map((col, i) => (
                    <Cell key={i} $right={col.right} $red={col.red}>
                      {col.value}
                    </Cell>
                  ))}
                </Row>
                <Row $kind="even">
                  <RowLead index={2} />
                </Row>
              </Table>
              <ColPanel>
                <ColButton>
                  <ColumnsIcon />
                  列
                </ColButton>
              </ColPanel>
            </TableWrap>
          </Page>
          <Footer>
            <CancelButton>取 消</CancelButton>
            <PrimaryButton $width={112}>保 存</PrimaryButton>
            <PrimaryButton $width={188}>按门店保存</PrimaryButton>
            <PrimaryButton $width={188}>保存并审核</PrimaryButton>
          </Footer>
          <ScrollTrack>
            <ScrollArrow />
            <ScrollThumb />
            <ScrollArrow $down />
          </ScrollTrack>
        </Content>
      </Main>
    </Body>
    <SideTab $top={494} $help>
      <BubbleIcon />
      <span>帮</span>
      <span>助</span>
      <span>中</span>
      <span>心</span>
    </SideTab>
    <SideTab $top={754}>
      <HeadsetIcon />
      <span>客</span>
      <span>服</span>
    </SideTab>
    <MarkLayer>
      {markRows.map((row) => (
        <MarkRow key={row} $shift={row % 2 !== 0}>
          {marksPerRow.map((n) => (
            <Mark key={n}>wqw3664</Mark>
          ))}
        </MarkRow>
      ))}
    </MarkLayer>
    <AnnotationArrow width="120" height="90" viewBox="0 0 120 90">
      <path d="M6 5 L100 74" stroke="#ee4422" strokeWidth="3.6" fill="none" />
      <path d="M112 83 L93 78 L100 74 L103 67Z" fill="#ee4422" />
    </AnnotationArrow>
  </Frame>
)

export default App
